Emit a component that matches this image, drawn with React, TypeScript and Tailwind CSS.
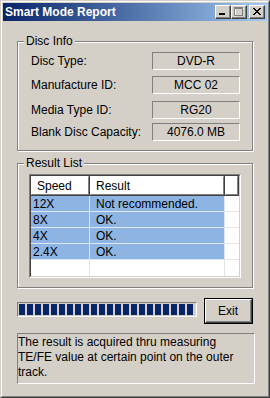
import React from "react";

const font = "font-['Liberation_Sans',Arial,sans-serif]";

function CaptionButton({ children, className = "" }: { children: React.ReactNode; className?: string }) {
  return (
    <div className={`w-[16px] h-[14px] bg-[#d4d0c8] border border-t-white border-l-white border-r-[#404040] border-b-[#404040] ${className}`}>
      <div className="w-full h-full border-r border-b border-r-[#808080] border-b-[#808080] flex items-center justify-center">
        {children}
      </div>
    </div>
  );
}

function GroupBox({ label, className, children }: { label: string; className: string; children: React.ReactNode }) {
  return (
    <div className={`relative border border-[#808080] shadow-[inset_1px_1px_0_#fff,1px_1px_0_#fff] ${className}`}>
      <div className="absolute left-[6px] top-[-8px] px-[2px] bg-[#d4d0c8] text-[12px] leading-[14px] text-black">{label}</div>
      {children}
    </div>
  );
}

function InfoRow({ label, value, mt }: { label: string; value: string; mt: string }) {
  return (
    <div className={`flex items-center ${mt}`}>
      <div className="w-[134px] pl-[13px] text-[12px] leading-[14px] text-black whitespace-nowrap">{label}</div>
      <div className="w-[88px] h-[18px] border border-t-[#808080] border-l-[#808080] border-r-white border-b-white flex items-center justify-center text-[12px] leading-[14px] text-black">
        {value}
      </div>
    </div>
  );
}

const rows = [
  ["12X", "Not recommended."],
  ["8X", "OK."],
  ["4X", "OK."],
  ["2.4X", "OK."],
];

function HeaderCell({ w, text }: { w: string; text: string }) {
  return (
    <div className={`${w} h-[20px] border-r border-b border-r-[#404040] border-b-[#404040]`}>
      <div className="h-full border border-t-white border-l-white border-r-[#808080] border-b-[#808080] pl-[5px] flex items-center text-[12px] leading-[14px] text-black">
        {text}
      </div>
    </div>
  );
}

export default function App() {
  return (
    <div className={`w-[270px] h-[398px] bg-[#d4d0c8] ${font} border border-t-[#d4d0c8] border-l-[#d4d0c8] border-r-[#404040] border-b-[#404040]`}>
      <div className="h-full border border-t-white border-l-white border-r-[#808080] border-b-[#808080] p-[1px] flex flex-col">
        {/* Title bar */}
        <div className="h-[18px] bg-gradient-to-r from-[#0a246a] to-[#a6caf0] flex items-center pl-[2px] pr-[2px]">
          <div className="text-white font-bold text-[12px] leading-[14px] flex-1 whitespace-nowrap">Smart Mode Report</div>
          <CaptionButton>
            <svg width="8" height="7" viewBox="0 0 8 7" shapeRendering="crispEdges">
              <rect x="0" y="5" width="6" height="2" fill="#000" />
            </svg>
          </CaptionButton>
          <CaptionButton>
            <svg width="10" height="10" viewBox="0 0 10 10" shapeRendering="crispEdges">
              <rect x="1" y="1" width="9" height="9" fill="none" stroke="#fff" strokeWidth="1" />
              <rect x="0.5" y="0.5" width="8" height="8" fill="none" stroke="#808080" strokeWidth="1" />
              <rect x="0" y="1" width="9" height="1" fill="#808080" />
            </svg>
          </CaptionButton>
          <CaptionButton className="ml-[2px]">
            <svg width="8" height="7" viewBox="0 0 8 7" shapeRendering="crispEdges" fill="#000">
              <rect x="0" y="0" width="2" height="1" />
              <rect x="6" y="0" width="2" height="1" />
              <rect x="1" y="1" width="2" height="1" />
              <rect x="5" y="1" width="2" height="1" />
              <rect x="2" y="2" width="4" height="1" />
              <rect x="3" y="3" width="2" height="1" />
              <rect x="2" y="4" width="4" height="1" />
              <rect x="1" y="5" width="2" height="1" />
              <rect x="5" y="5" width="2" height="1" />
              <rect x="0" y="6" width="2" height="1" />
              <rect x="6" y="6" width="2" height="1" />
            </svg>
          </CaptionButton>
        </div>

        {/* Content */}
        <div className="pl-[14px] flex flex-col">
          <GroupBox label="Disc Info" className="mt-[20px] w-[236px] h-[110px]">
            <div className="flex flex-col">
              <InfoRow label="Disc Type:" value="DVD-R" mt="mt-[10px]" />
              <InfoRow label="Manufacture ID:" value="MCC 02" mt="mt-[6px]" />
              <InfoRow label="Media Type ID:" value="RG20" mt="mt-[7px]" />
              <InfoRow label="Blank Disc Capacity:" value="4076.0 MB" mt="mt-[4px]" />
            </div>
          </GroupBox>

          <GroupBox label="Result List" className="mt-[12px] w-[236px] h-[125px]">
            <div className="ml-[11px] mt-[10px] w-[212px] h-[104px] border border-t-[#808080] border-l-[#808080] border-r-white border-b-white">
              <div className="w-full h-full border border-t-[#404040] border-l-[#404040] border-r-[#d4d0c8] border-b-[#d4d0c8] bg-white flex flex-col">
                <div className="flex">
                  <HeaderCell w="w-[59px]" text="Speed" />
                  <HeaderCell w="w-[135px]" text="Result" />
                  <HeaderCell w="w-[14px]" text="" />
                </div>
                {rows.map(([s, r]) => (
                  <div key={s} className="flex h-[16px]">
                    <div className="w-[59px] bg-[#8db4e3] border-r border-b border-[#dde6f2] pl-[2px] flex items-center text-[12px] leading-[14px] text-[#000]">{s}</div>
                    <div className="w-[135px] bg-[#8db4e3] border-r border-b border-[#dde6f2] pl-[6px] flex items-center text-[12px] leading-[14px] text-[#000]">{r}</div>
                    <div className="w-[14px] border-b border-[#e4e4e4]"></div>
                  </div>
                ))}
                <div className="flex h-[16px]">
                  <div className="w-[59px] border-r border-[#e4e4e4]"></div>
                  <div className="w-[135px] border-r border-[#e4e4e4]"></div>
                  <div className="w-[14px]"></div>
                </div>
              </div>
            </div>
          </GroupBox>

          <div className="mt-[10px] flex items-start">
            <div className="mt-[4px] w-[180px] h-[15px] border border-t-[#808080] border-l-[#808080] border-r-white border-b-white p-[1px] flex gap-[2px]">
              {Array.from({ length: 22 }).map((_, i) => (
                <div key={i} className="w-[6px] h-full bg-[#0a246a]" />
              ))}
            </div>
            <div className="ml-[7px] w-[49px] h-[26px] border border-black">
              <div className="w-full h-full border border-t-white border-l-white border-r-[#404040] border-b-[#404040]">
                <div className="w-full h-full border-r border-b border-r-[#808080] border-b-[#808080] flex items-center justify-center text-[12px] leading-[14px] text-black">
                  Exit
                </div>
              </div>
            </div>
          </div>

          <div className="mt-[9px] w-[238px] h-[51px] border border-t-[#808080] border-l-[#808080] border-r-white border-b-white pt-[1px] text-[12px] leading-[15px] text-black whitespace-nowrap">
            The result is acquired thru measuring
            <br />
            TE/FE value at certain point on the outer
            <br />
            track.
          </div>
        </div>
      </div>
    </div>
  );
}
